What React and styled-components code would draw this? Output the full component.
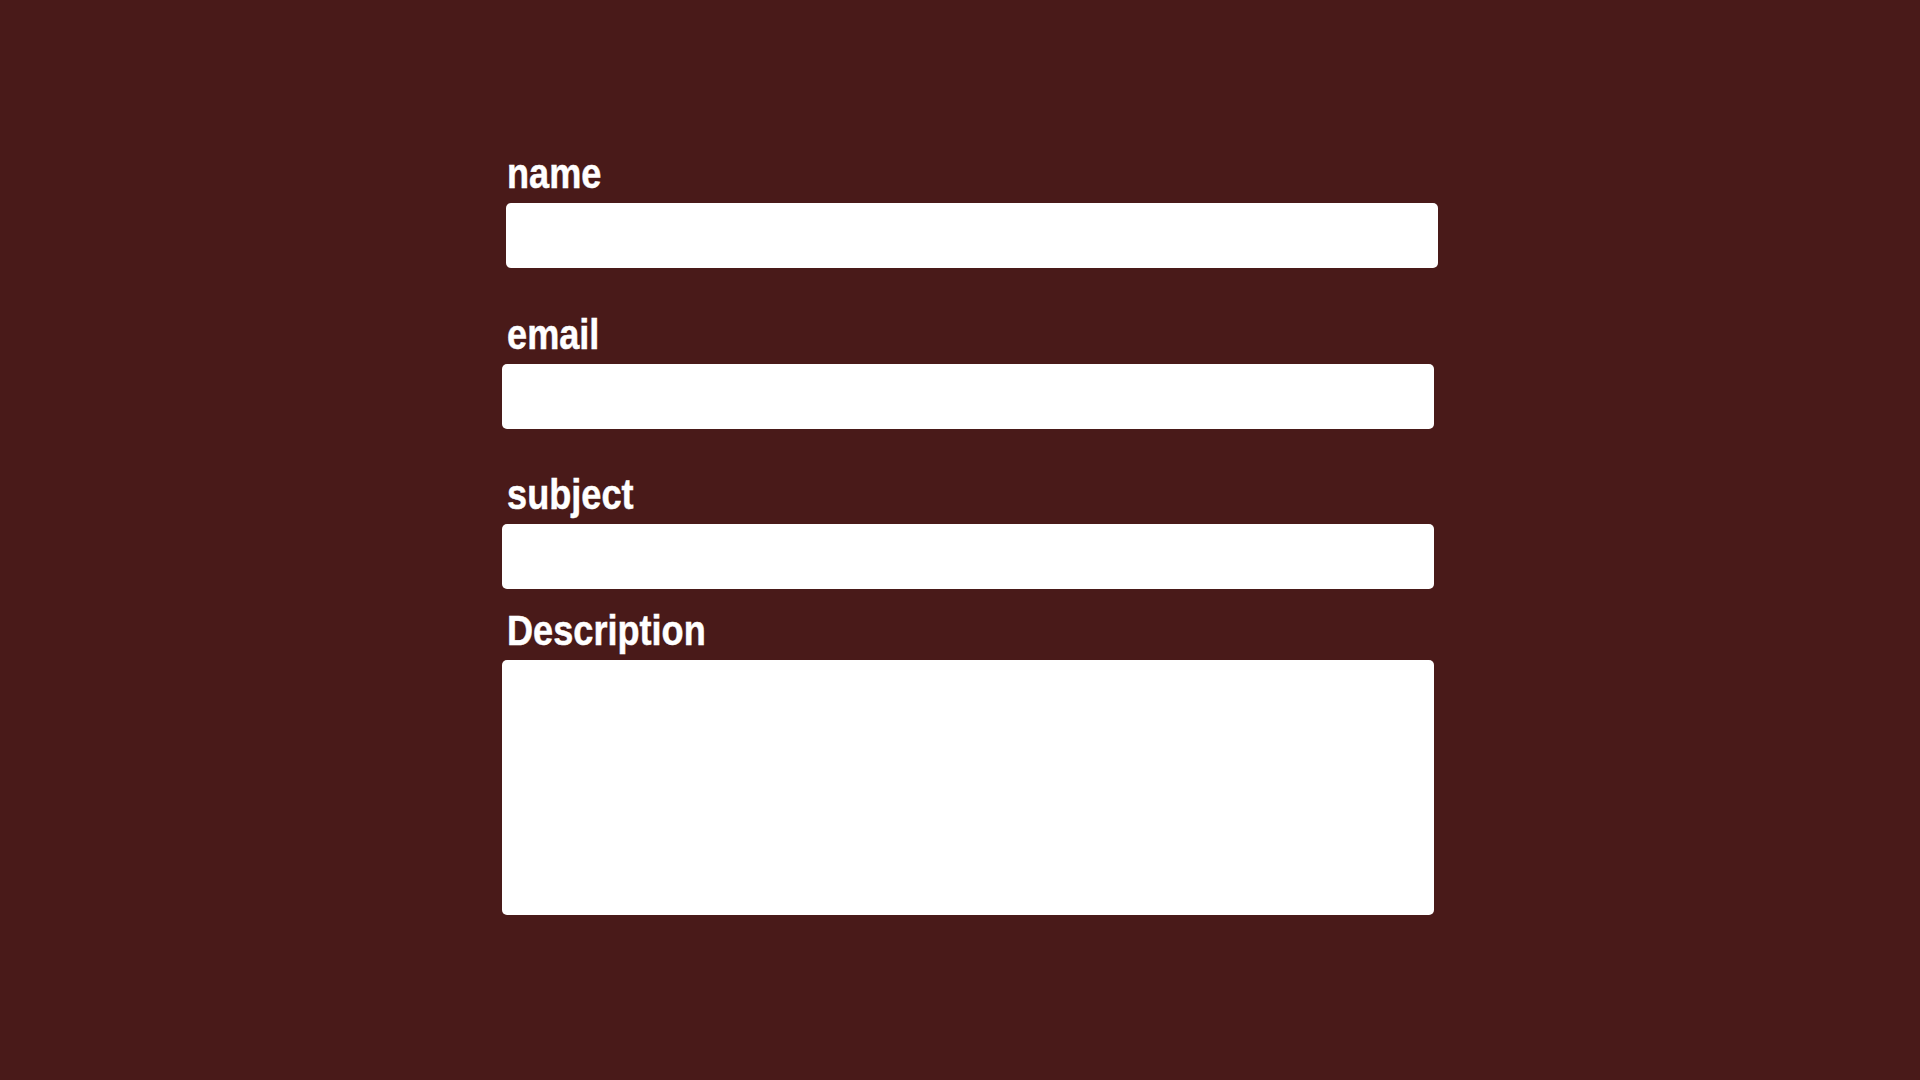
import React from "react";
import styled, { createGlobalStyle } from "styled-components";

const GlobalStyle = createGlobalStyle`
  html, body {
    margin: 0;
    padding: 0;
    background: #491a19;
  }
  body {
    min-height: 1080px;
    font-family: "Liberation Sans", Arial, sans-serif;
  }
`;

const Page = styled.main`
  min-height: 1080px;
  background: #491a19;
  padding: 149px 0 0 502px;
  box-sizing: border-box;
`;

const Form = styled.form`
  width: 936px;
  display: flex;
  flex-direction: column;
`;

const Field = styled.div`
  display: flex;
  flex-direction: column;
  margin-bottom: ${(p) => p.$spacing}px;
`;

/* Bold narrow label face: Liberation Sans Bold squeezed horizontally */
const Label = styled.label`
  display: block;
  padding-left: 6px;
  height: 48px;
  margin-bottom: 6px;
  font-family: "Liberation Sans", Arial, sans-serif;
  font-weight: 700;
  font-size: 43px;
  line-height: 48px;
  color: #ffffff;
  -webkit-text-stroke: 0.5px #ffffff;
  transform: scaleX(0.84);
  transform-origin: left center;
  white-space: nowrap;
`;

const Input = styled.input`
  display: block;
  box-sizing: border-box;
  width: 932px;
  height: 65px;
  margin: 0 0 0 ${(p) => p.$shift || 0}px;
  padding: 0 14px;
  border: none;
  border-radius: 5px;
  background: #ffffff;
  font-family: "Liberation Sans", Arial, sans-serif;
  font-size: 20px;
  outline: none;
`;

const TextArea = styled.textarea`
  display: block;
  box-sizing: border-box;
  width: 932px;
  height: 255px;
  margin: 0;
  padding: 12px 14px;
  border: none;
  border-radius: 5px;
  background: #ffffff;
  resize: none;
  font-family: "Liberation Sans", Arial, sans-serif;
  font-size: 20px;
  outline: none;
`;

export default function App() {
  return (
    <>
      <GlobalStyle />
      <Page>
        <Form onSubmit={(e) => e.preventDefault()}>
          <Field $spacing={42}>
            <Label htmlFor="name">name</Label>
            <Input id="name" type="text" $shift={4} />
          </Field>
          <Field $spacing={41}>
            <Label htmlFor="email">email</Label>
            <Input id="email" type="email" />
          </Field>
          <Field $spacing={17}>
            <Label htmlFor="subject">subject</Label>
            <Input id="subject" type="text" />
          </Field>
          <Field $spacing={0}>
            <Label htmlFor="description">Description</Label>
            <TextArea id="description" />
          </Field>
        </Form>
      </Page>
    </>
  );
}
